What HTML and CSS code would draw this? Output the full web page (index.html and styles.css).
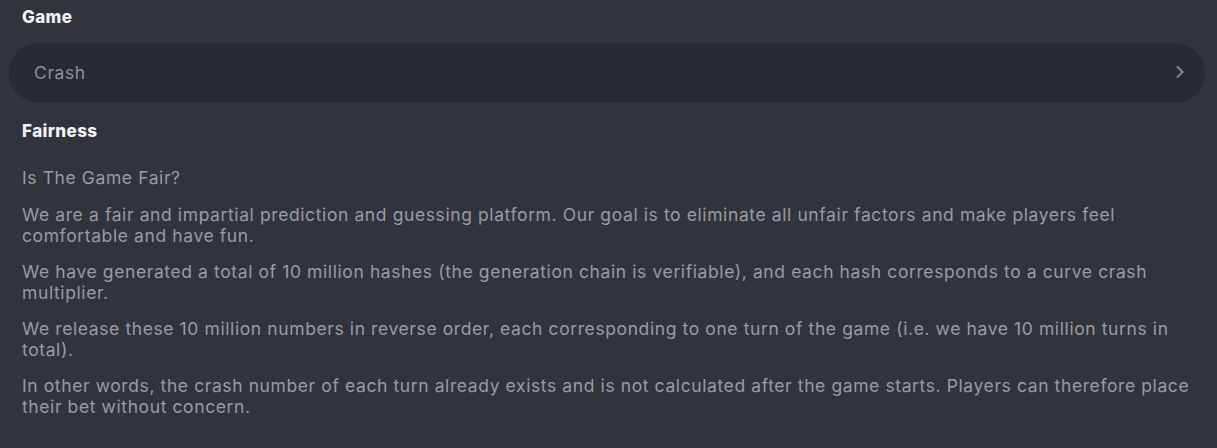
FILE: index.html
```html
<!DOCTYPE html>
<html lang="en">
<head>
<meta charset="utf-8">
<title>Fairness</title>
<link rel="stylesheet" href="styles.css">
</head>
<body>
<div class="panel">
  <h3 class="label">Game</h3>
  <div class="select">
    <span class="select-value">Crash</span>
    <svg class="chevron" width="10" height="14" viewBox="0 0 10 14" aria-hidden="true"><path d="M2.5 2 L7.5 7 L2.5 12" fill="none" stroke="#8a8f9b" stroke-width="1.8" stroke-linecap="square"/></svg>
  </div>
  <h3 class="label label-fair">Fairness</h3>
  <div class="content">
    <p class="question">Is The Game Fair?</p>
    <p>We are a fair and impartial prediction and guessing platform. Our goal is to eliminate all unfair factors and make players feel comfortable and have fun.</p>
    <p>We have generated a total of 10 million hashes (the generation chain is verifiable), and each hash corresponds to a curve crash multiplier.</p>
    <p>We release these 10 million numbers in reverse order, each corresponding to one turn of the game (i.e. we have 10 million turns in total).</p>
    <p>In other words, the crash number of each turn already exists and is not calculated after the game starts. Players can therefore place their bet without concern.</p>
  </div>
</div>
</body>
</html>
```
FILE: styles.css
```css
html, body {
  margin: 0;
  padding: 0;
  background: #31343d;
}
body {
  font-family: "Inter", "Open Sans", sans-serif;
  color: #979ca7;
}
.panel {
  padding: 6px 12px 0 9px;
}
.label {
  margin: 0;
  padding-left: 13px;
  font-size: 17px;
  line-height: 22px;
  font-weight: 800;
  letter-spacing: 0.4px;
  color: #f2f3f5;
}
.select {
  margin-top: 15px;
  height: 60px;
  border-radius: 30px;
  background: #292b32;
  display: flex;
  align-items: center;
  justify-content: space-between;
  padding: 0 20px 2px 25px;
  box-sizing: border-box;
}
.select-value {
  font-size: 17.5px;
  color: #8c919c;
  letter-spacing: 0.6px;
}
.chevron {
  display: block;
}
.label-fair {
  margin-top: 17px;
}
.content {
  padding-left: 13px;
  padding-top: 25px;
}
.content p {
  margin: 0 0 15px;
  font-size: 17.5px;
  line-height: 21px;
  letter-spacing: 0.6px;
}
.content .question {
  margin-bottom: 16px;
}
```
